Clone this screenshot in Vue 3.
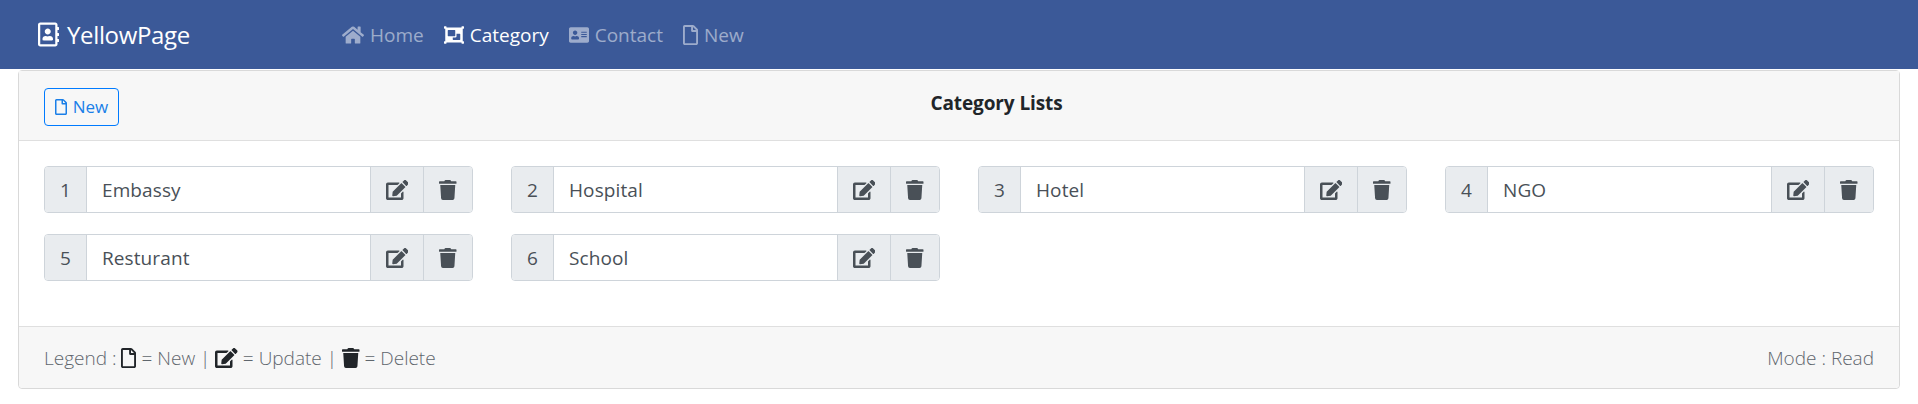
<script setup>
const items = [
  { id: 1, name: 'Embassy' },
  { id: 2, name: 'Hospital' },
  { id: 3, name: 'Hotel' },
  { id: 4, name: 'NGO' },
  { id: 5, name: 'Resturant' },
  { id: 6, name: 'School' }
];

const icons = {
  file: 'M369.9 97.9L286 14C277 5 264.8-.1 252.1-.1H48C21.5 0 0 21.5 0 48v416c0 26.5 21.5 48 48 48h288c26.5 0 48-21.5 48-48V131.9c0-12.7-5.1-25-14.1-34zM332.1 128H256V51.9l76.1 76.1zM48 464V48h160v104c0 13.3 10.7 24 24 24h104v288H48z',
  edit: 'M402.6 83.2l90.2 90.2c3.8 3.8 3.8 10 0 13.8L274.4 405.6l-92.8 10.3c-12.4 1.4-22.9-9.1-21.5-21.5l10.3-92.8L388.8 83.2c3.8-3.8 10-3.8 13.8 0zm162-22.9l-48.8-48.8c-15.2-15.2-39.9-15.2-55.2 0l-35.4 35.4c-3.8 3.8-3.8 10 0 13.8l90.2 90.2c3.8 3.8 10 3.8 13.8 0l35.4-35.4c15.2-15.3 15.2-40 0-55.2zM384 346.2V448H64V128h229.8c3.2 0 6.2-1.3 8.5-3.5l40-40c7.6-7.6 2.2-20.5-8.5-20.5H48C21.5 64 0 85.5 0 112v352c0 26.5 21.5 48 48 48h352c26.5 0 48-21.5 48-48V306.2c0-10.7-12.9-16-20.5-8.5l-40 40c-2.2 2.3-3.5 5.3-3.5 8.5z',
  trash: 'M432 32H312l-9.4-18.7A24 24 0 0 0 281.1 0H166.8a23.72 23.72 0 0 0-21.4 13.3L136 32H16A16 16 0 0 0 0 48v32a16 16 0 0 0 16 16h416a16 16 0 0 0 16-16V48a16 16 0 0 0-16-16zM53.2 467a48 48 0 0 0 47.9 45h245.8a48 48 0 0 0 47.9-45L416 128H32z',
  home: 'M280.37 148.26L96 300.11V464a16 16 0 0 0 16 16l112.06-.29a16 16 0 0 0 15.92-16V368a16 16 0 0 1 16-16h64a16 16 0 0 1 16 16v95.64a16 16 0 0 0 16 16.05L464 480a16 16 0 0 0 16-16V300L295.67 148.26a12.19 12.19 0 0 0-15.3 0zM571.6 251.47L488 182.56V44.05a12 12 0 0 0-12-12h-56a12 12 0 0 0-12 12v72.61L318.47 43a48 48 0 0 0-61 0L4.34 251.47a12 12 0 0 0-1.6 16.9l25.5 31A12 12 0 0 0 45.15 301l235.22-193.74a12.19 12.19 0 0 1 15.3 0L530.9 301a12 12 0 0 0 16.9-1.6l25.5-31a12 12 0 0 0-1.7-16.93z',
  book: 'M436 160c6.6 0 12-5.4 12-12v-40c0-6.6-5.4-12-12-12h-20V48c0-26.5-21.5-48-48-48H48C21.5 0 0 21.5 0 48v416c0 26.5 21.5 48 48 48h320c26.5 0 48-21.5 48-48v-48h20c6.6 0 12-5.4 12-12v-40c0-6.6-5.4-12-12-12h-20v-64h20c6.6 0 12-5.4 12-12v-40c0-6.6-5.4-12-12-12h-20v-64h20zm-68 304H48V48h320v416zM208 256c35.3 0 64-28.7 64-64s-28.7-64-64-64-64 28.7-64 64 28.7 64 64 64zm-89.6 128h179.2c12.4 0 22.4-8.6 22.4-19.2v-19.2c0-31.8-30.1-57.6-67.2-57.6-10.8 0-18.7 8-44.8 8-26.9 0-33.4-8-44.8-8-37.1 0-67.2 25.8-67.2 57.6v19.2c0 10.6 10 19.2 22.4 19.2z',
  card: 'M528 32H48C21.5 32 0 53.5 0 80v352c0 26.5 21.5 48 48 48h480c26.5 0 48-21.5 48-48V80c0-26.5-21.5-48-48-48zm-352 96c35.3 0 64 28.7 64 64s-28.7 64-64 64-64-28.7-64-64 28.7-64 64-64zm112 236.8c0 10.6-10 19.2-22.4 19.2H86.4C74 384 64 375.4 64 364.8v-19.2c0-31.8 30.1-57.6 67.2-57.6h5c12.3 5.1 25.7 8 39.8 8s27.6-2.9 39.8-8h5c37.1 0 67.2 25.8 67.2 57.6v19.2zM512 312c0 4.4-3.6 8-8 8H360c-4.4 0-8-3.6-8-8v-16c0-4.4 3.6-8 8-8h144c4.4 0 8 3.6 8 8v16zm0-64c0 4.4-3.6 8-8 8H360c-4.4 0-8-3.6-8-8v-16c0-4.4 3.6-8 8-8h144c4.4 0 8 3.6 8 8v16zm0-64c0 4.4-3.6 8-8 8H360c-4.4 0-8-3.6-8-8v-16c0-4.4 3.6-8 8-8h144c4.4 0 8 3.6 8 8v16z',
  group: 'M480 128V96h20c6.627 0 12-5.373 12-12V44c0-6.627-5.373-12-12-12h-40c-6.627 0-12 5.373-12 12v20H64V44c0-6.627-5.373-12-12-12H12C5.373 32 0 37.373 0 44v40c0 6.627 5.373 12 12 12h20v320H12c-6.627 0-12 5.373-12 12v40c0 6.627 5.373 12 12 12h40c6.627 0 12-5.373 12-12v-20h384v20c0 6.627 5.373 12 12 12h40c6.627 0 12-5.373 12-12v-40c0-6.627-5.373-12-12-12h-20V128zM96 276V140c0-6.627 5.373-12 12-12h168c6.627 0 12 5.373 12 12v136c0 6.627-5.373 12-12 12H108c-6.627 0-12-5.373-12-12zm320 96c0 6.627-5.373 12-12 12H236c-6.627 0-12-5.373-12-12v-52h72c13.255 0 24-10.745 24-24v-72h84c6.627 0 12 5.373 12 12v136z'
};

const navLinks = [
  { label: 'Home', icon: icons.home, box: '0 0 576 512', w: 22, active: false },
  { label: 'Category', icon: icons.group, box: '0 0 512 512', w: 20, active: true },
  { label: 'Contact', icon: icons.card, box: '0 0 576 512', w: 20, active: false },
  { label: 'New', icon: icons.file, box: '0 0 384 512', w: 15, active: false }
];
</script>

<template>
  <div class="page">
    <nav class="navbar">
      <a class="brand">
        <svg class="brand-icon" viewBox="0 0 448 512"><path :d="icons.book" /></svg>
        YellowPage
      </a>
      <ul class="nav">
        <li v-for="link in navLinks" :key="link.label" :class="['nav-link', { active: link.active }]">
          <svg :viewBox="link.box" :style="{ width: link.w + 'px' }"><path :d="link.icon" /></svg>
          <span>{{ link.label }}</span>
        </li>
      </ul>
    </nav>

    <section class="card">
      <header class="card-header">
        <button class="btn-new">
          <svg viewBox="0 0 384 512"><path :d="icons.file" /></svg>
          New
        </button>
        <h5 class="title">Category Lists</h5>
      </header>

      <div class="card-body">
        <div v-for="item in items" :key="item.id" class="input-group">
          <span class="addon num">{{ item.id }}</span>
          <span class="field">{{ item.name }}</span>
          <span class="addon act edit"><svg viewBox="0 0 576 512"><path :d="icons.edit" /></svg></span>
          <span class="addon act trash"><svg viewBox="0 0 448 512"><path :d="icons.trash" /></svg></span>
        </div>
      </div>

      <footer class="card-footer">
        <div class="legend">
          Legend :
          <svg class="lg-file" viewBox="0 0 384 512"><path :d="icons.file" /></svg>
          = New |
          <svg class="lg-edit" viewBox="0 0 576 512"><path :d="icons.edit" /></svg>
          = Update |
          <svg class="lg-trash" viewBox="0 0 448 512"><path :d="icons.trash" /></svg>
          = Delete
        </div>
        <div>Mode : Read</div>
      </footer>
    </section>
  </div>
</template>

<style>
html,
body {
  margin: 0;
  background: #fff;
}
</style>

<style scoped>
.page {
  font-family: "Open Sans", "Noto Sans", sans-serif;
  width: 1918px;
  height: 404px;
  overflow: hidden;
  box-sizing: border-box;
}

svg {
  fill: currentColor;
  display: block;
  flex: none;
}

.navbar {
  height: 69px;
  background: #3b5998;
  display: flex;
  align-items: center;
  padding-left: 38px;
  box-sizing: border-box;
}

.brand {
  display: flex;
  align-items: center;
  gap: 8px;
  color: #fff;
  font-size: 24px;
  letter-spacing: -0.35px;
  width: 304px;
}

.brand-icon {
  width: 21px;
  height: 25px;
}

.nav {
  display: flex;
  gap: 20px;
  list-style: none;
  margin: 0;
  padding: 0;
}

.nav-link {
  display: flex;
  align-items: center;
  gap: 6px;
  font-size: 19px;
  color: rgba(255, 255, 255, 0.5);
}

.nav-link svg {
  height: 20px;
}

.nav-link.active {
  color: #fff;
}

.card {
  margin: 1px 18px 0;
  height: 319px;
  border: 1px solid #d9d9d9;
  border-radius: 4px;
  box-sizing: border-box;
  display: flex;
  flex-direction: column;
  color: #495057;
}

.card-header {
  height: 70px;
  background: #f7f7f7;
  border-bottom: 1px solid #dfdfdf;
  display: flex;
  align-items: center;
  padding: 0 25px;
  box-sizing: border-box;
}

.btn-new {
  width: 75px;
  height: 38px;
  margin-top: 2px;
  border: 1px solid #007bff;
  border-radius: 4px;
  background: transparent;
  color: #1a7fe8;
  font: inherit;
  font-size: 17px;
  display: flex;
  align-items: center;
  justify-content: center;
  gap: 6px;
  padding: 0;
}

.btn-new svg {
  width: 12px;
  height: 16px;
}

.title {
  flex: 1;
  margin: 0 0 6px;
  text-align: center;
  font-size: 19px;
  font-weight: 700;
  letter-spacing: -0.1px;
  color: #212529;
}

.card-body {
  flex: 1;
  padding: 25px 25px 0;
  display: grid;
  grid-template-columns: repeat(4, 429px);
  column-gap: 38px;
  row-gap: 20.6px;
  align-content: start;
}

.input-group {
  display: flex;
  height: 47.4px;
  border: 1px solid #ced4da;
  border-radius: 4px;
  box-sizing: border-box;
  overflow: hidden;
  font-size: 19px;
  letter-spacing: 0.1px;
}

.addon {
  background: #e9ecef;
  display: flex;
  align-items: center;
  justify-content: center;
  flex: none;
  box-sizing: border-box;
}

.num {
  width: 42px;
  border-right: 1px solid #ced4da;
}

.field {
  flex: 1;
  display: flex;
  align-items: center;
  padding-left: 15px;
  color: #495057;
  background: #fff;
}

.act {
  border-left: 1px solid #ced4da;
}

.edit {
  width: 53px;
}

.edit svg {
  width: 22.5px;
  height: 20px;
}

.trash {
  width: 49px;
}

.trash svg {
  width: 17.5px;
  height: 20px;
}

.card-footer {
  height: 62px;
  background: #f7f7f7;
  border-top: 1px solid #dfdfdf;
  display: flex;
  align-items: center;
  justify-content: space-between;
  padding: 0 25px;
  box-sizing: border-box;
  font-size: 19px;
  font-weight: 300;
  color: #5f666d;
  border-radius: 0 0 4px 4px;
}

.legend {
  display: flex;
  align-items: center;
  gap: 5px;
}

.lg-file,
.lg-edit,
.lg-trash {
  color: #212529;
}

.lg-file {
  width: 15px;
  height: 20px;
}

.lg-edit {
  width: 22.5px;
  height: 20px;
}

.lg-trash {
  width: 17.5px;
  height: 20px;
}
</style>
